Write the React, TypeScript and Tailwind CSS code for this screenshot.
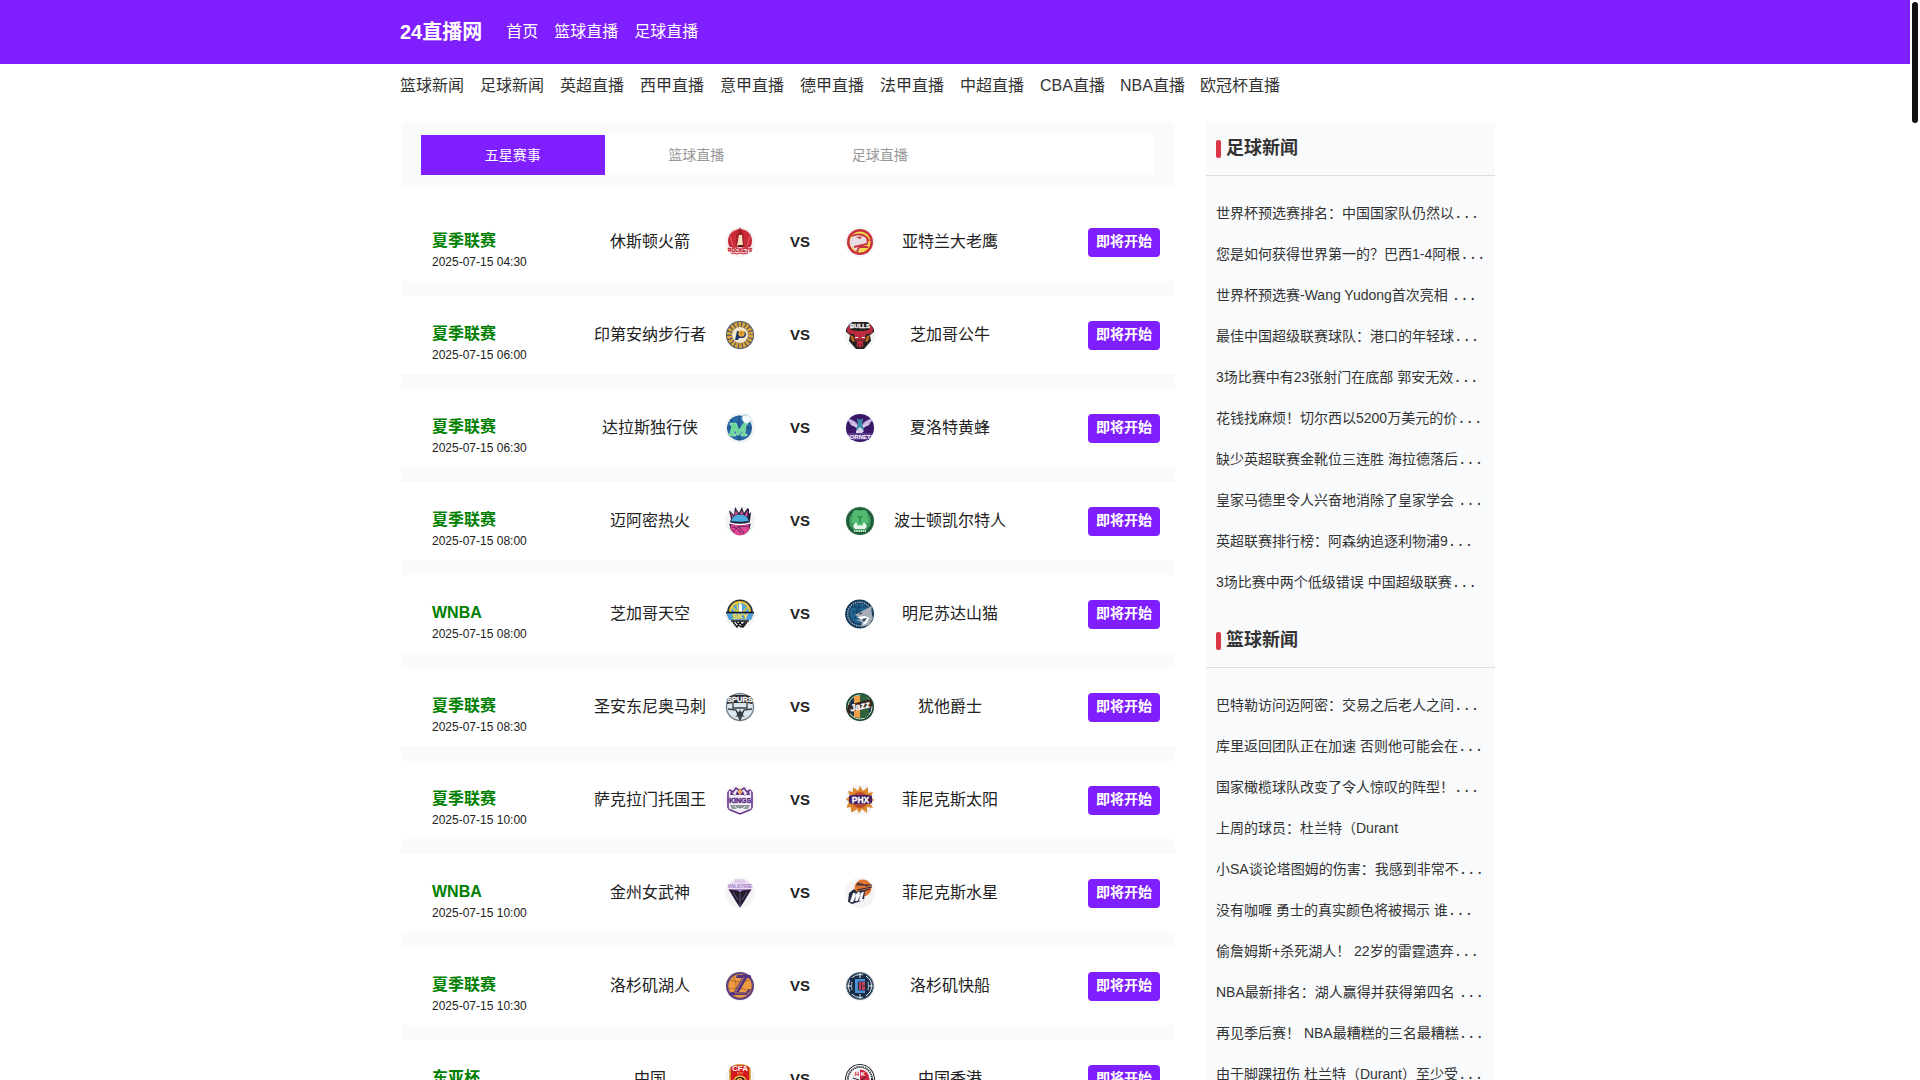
import type { ReactNode } from 'react';

const label = { fontFamily: '"Liberation Sans", Arial, sans-serif', fontWeight: 700 } as const;

/* Team emblems, each drawn on a 30 x 30 canvas. */
const emblems: Record<string, ReactNode> = {
  rockets: (
    <>
      <circle cx="15" cy="14" r="12" fill="#c92a3a" />
      <path d="M7 5 12 3M5 9l3 10M25 9l-3 10" stroke="#e3626d" strokeWidth="1" />
      <path d="M15 0 11 9v11h8V9z" fill="#a51f2c" />
      <path d="M14 8h3l1 11h-6z" fill="#f2e2bb" />
      <path d="M13 18h5v2h-5z" fill="#5c1b1d" />
      <path d="m2 19 7 2 6-1 6 1 7-2-2 7-5 1-6-1-5 1-6-1z" fill="#f6dfe2" />
      <text x="15" y="25" fontSize="5" textAnchor="middle" fill="#c3202f" stroke="#c3202f" strokeWidth=".3" style={label}>ROCKETS</text>
      <path d="m6 27 3-1 3 1 3-1 3 1 5-1" stroke="#c92a3a" strokeWidth="1" fill="none" />
    </>
  ),
  hawks: (
    <>
      <circle cx="15" cy="15" r="13" fill="#c8323f" />
      <circle cx="15" cy="15" r="10.500" fill="#f4dc4c" />
      <path d="M5 18V13l4-6 10 1 4 5-1 4-8 3 1 4-5-1z" fill="#e8dde1" />
      <path d="M7 9c6-3 14-2 17 5M9 20l13-3c1-2 1-3 0-5M12 25c1-3 1-4 3-5l8 0" stroke="#c8323f" strokeWidth="1.800" fill="none" />
      <path d="m11 10 6-.5-2 2.500-2-1z" fill="#c8323f" />
    </>
  ),
  pacers: (
    <>
      <circle cx="15" cy="15" r="14" fill="#4b5565" />
      <circle cx="15" cy="15" r="10.600" fill="none" stroke="#d9a33a" strokeWidth="5" strokeDasharray="2.600 1.100" />
      <circle cx="15" cy="15" r="8" fill="#f4e8cf" />
      <path d="m10 20 2-9h5c6 0 5 7 0 7h-3l-1 2z" fill="#1d3567" />
      <circle cx="16.500" cy="13.500" r="3.200" fill="#edb13a" />
      <path d="M14 13h5M16.500 11v6" stroke="#94601e" strokeWidth=".5" />
    </>
  ),
  bulls: (
    <>
      <path d="M1 12C0 8 3 3 6 2h18c3 1 6 6 5 10l-4 3 1 6-7 8h-8l-7-8 1-6z" fill="#25211f" />
      <path d="M2 11c0-3 1-5 3-6l1 5 6 1h6l6-1 1-5c2 1 3 3 3 6-1 3-4 3-7 3l-1 5-2 5h-6l-2-5-1-5c-3 0-6 0-7-3z" fill="#bd2b3e" />
      <path d="m5 15 3 1 2 6-3-1zM25 15l-3 1-2 6 3-1z" fill="#c66a24" />
      <path d="M10 17.500h3M20 17.500h-3" stroke="#fff" strokeWidth="1" />
      <path d="M12 20h6l1 6-4 2-4-2z" fill="#bd2b3e" stroke="#25211f" strokeWidth=".8" />
      <path d="M13 25h1M16 25h1" stroke="#111" />
      <text x="15" y="8" fontSize="6" textAnchor="middle" fill="#fff" stroke="#fff" strokeWidth=".3" style={label}>BULLS</text>
    </>
  ),
  mavs: (
    <>
      <circle cx="14.500" cy="15" r="12.500" fill="#2869a3" />
      <path d="M14 2.500v25M2 15h24M5 6c6 5 6 13 0 18M23 6c-6 5-6 13 0 18" stroke="#173f6b" strokeWidth=".8" fill="none" />
      <path d="M17 4c2-4 4-1 5-2 2 0 2 3 6 3-1 4-4 4-6 6-3-1-6-4-5-7z" fill="#f6f9fc" stroke="#679fc5" strokeWidth=".7" />
      <path d="M5 10h6l3 7 5-7h4l-1 2h-1l-1 9h2v2h-6v-2h1l1-5-4 6h-2l-2-6-1 5h2v2H3v-2h2l2-9H5z" fill="#68d995" stroke="#c9f5da" strokeWidth=".5" />
    </>
  ),
  hornets: (
    <>
      <circle cx="15" cy="15" r="14" fill="#3a1768" />
      <path d="M13 12C10 7 6 6 2 6l4 6 6 3zM17 12c3-5 7-6 11-6l-4 6-6 3z" fill="#b9a3dc" />
      <path d="m3 6 9 7M27 6l-9 7M6 11l6 3M24 11l-6 3" stroke="#eef" strokeWidth=".8" />
      <path d="m12 5 3 2 3-2-1 7 2 4-4 4-4-4 2-4z" fill="#3c8ea8" />
      <path d="m11 18 4-4 4 4-4 4-4-2z" fill="#d8d5ed" />
      <path d="M3 20h24l-3 7H6z" fill="#5b3a8d" />
      <text x="15" y="25.500" fontSize="6" textAnchor="middle" fill="#fff" style={label}>HORNETS</text>
    </>
  ),
  heat: (
    <>
      <path d="M6 13 4 4l5 5 1-8 4 6 3-6 2 6 5-7v8l2-2-1 9z" fill="#23203b" />
      <path d="m7 13-1-6 3 4 2-7 3 6 3-6 2 6 4-6-1 10z" fill="#d94995" />
      <circle cx="15" cy="18.500" r="10.500" fill="#21203b" />
      <path d="M6 15a9.500 9.500 0 0 1 18 0c-6 1-12 1-18 0" fill="#4aaede" />
      <path d="M5.500 20A9.500 9.500 0 0 0 24.500 20z" fill="#df4594" />
      <path d="M5 17c6 2 14 2 20 0" stroke="#fff" strokeWidth="1.600" fill="none" />
      <path d="M6 17.800c6 2 12 2 18 0v4H6z" fill="#df4594" />
      <path d="M8 26c3-5 9-7 16-5M13 20c2 2 5 5 6 8M7 21c4 0 8 3 9 7" stroke="#42244f" strokeWidth=".8" fill="none" />
    </>
  ),
  celtics: (
    <>
      <circle cx="15" cy="15" r="14" fill="#22623c" />
      <circle cx="15" cy="15" r="11.700" fill="#3c9b5b" stroke="#1b4b30" strokeWidth="1" />
      <g fill="#52ba71">
        <circle cx="11.500" cy="8" r="4" /><circle cx="18.500" cy="8" r="4" /><circle cx="10" cy="14" r="3.800" /><circle cx="20" cy="14" r="3.800" />
        <path d="M10 8h10v12H10z" />
      </g>
      <path d="m13 10 2 2 2-2M15 12v5" stroke="#2d834a" strokeWidth="1.300" fill="none" />
      <path d="m8 20 3-4 2 4 2-1 2 1 2-4 3 4-2 3h-10z" fill="#e6f5ea" />
      <path d="M9 25h12" stroke="#c7e8cf" strokeWidth="2" strokeDasharray="1.500 .7" />
    </>
  ),
  sky: (
    <>
      <path d="M2 14a13 13.500 0 0 1 26 0z" fill="#26303b" />
      <path d="M4 13a11 11 0 0 1 22 0z" fill="#edc735" />
      <path d="M6 13a9 9 0 0 1 18 0z" fill="#57a6db" />
      <path d="m7 8 5 5M12 4l1 9M23 8l-5 5" stroke="#edc735" strokeWidth="1.500" />
      <path d="M14 14V6l1-3 2 4v7z" fill="#fff" />
      <path d="M1 14h28l-3 7H4z" fill="#4d9ddb" /><path d="M1 13.500h28" stroke="#111" strokeWidth="1.400" />
      <text x="15" y="20.300" fontSize="7.500" textAnchor="middle" fill="#f7dd3f" stroke="#f7dd3f" strokeWidth=".4" style={label}>SKY</text>
      <path d="M6 22h18M8 23l4 5 3-5 3 5 4-5M11 23l5 5 4-5" stroke="#111" strokeWidth="1.300" fill="none" />
    </>
  ),
  lynx: (
    <>
      <circle cx="14.500" cy="15" r="14.500" fill="#173b5b" />
      <circle cx="14.500" cy="15" r="11.800" fill="none" stroke="#a5b9c8" strokeWidth="1.400" strokeDasharray="1.300 1" />
      <circle cx="14.500" cy="14.500" r="10" fill="#216390" />
      <path d="M7 8h15M7 13h12M14 5v13M9 6c4 4 4 9 0 14" stroke="#103553" strokeWidth=".8" fill="none" />
      <path d="m10 16 9-5 8-4-1 6 2 6-4 7-8 2 1-5-6-2 6-1z" fill="#a7adb7" />
      <path d="m12 18 8-1 4 2-2 5-4 2 1-4z" fill="#fff" /><path d="m14 15 3-1" stroke="#1c2d3c" /><path d="m17 20 5-1-3 4z" fill="#173b5b" />
    </>
  ),
  spurs: (
    <>
      <circle cx="15" cy="15" r="13.500" fill="#dce6ef" stroke="#6b747d" strokeWidth="1.200" />
      <path d="M8 11v5h14v-5M3 17l8 1 4 10 4-10 8-1" stroke="#343b42" strokeWidth="1.300" fill="none" />
      <path d="m15 17 1 3 3-1-2 3 3 3-4-1-1 4-1-4-4 1 3-3-2-3 3 1z" fill="#343b42" />
      <path d="M1 5c9-3 18-3 28 0l-2 7-5-1H8l-6 1z" fill="#24272a" />
      <text x="15" y="10" fontSize="7.500" textAnchor="middle" fill="#fff" stroke="#fff" strokeWidth=".3" style={label}>SPURS</text>
    </>
  ),
  jazz: (
    <>
      <circle cx="15" cy="15" r="14" fill="#1a4730" />
      <circle cx="15" cy="15" r="12" fill="#183650" stroke="#dbe2d3" strokeWidth="1" />
      <path d="M9 4h6v22l-6-1z" fill="#efa044" /><path d="M15 3h6l3 5v15l-4 3h-5z" fill="#2e633e" />
      <path d="m3 13 23-6 2 7-19 5-5 3-2-3z" fill="#3a271d" />
      <text x="15" y="17.500" fontSize="9.500" textAnchor="middle" fill="#fff" stroke="#fff" strokeWidth=".3" fontStyle="italic" transform="rotate(-12 15 15)" style={label}>Jazz</text>
    </>
  ),
  kings: (
    <>
      <path d="M3 4 8 7l3-4 4 3 4-3 3 4 5-3v20l-12 5-12-5z" fill="#f3edf7" stroke="#62358c" strokeWidth="1.600" />
      <path d="m5 10 1-4 4 5 2-5 3 4 3-4 2 5 4-5 1 4z" fill="#62358c" />
      <path d="m13 7 2-4 2 4-2 3z" fill="#e9a43f" />
      <text x="15" y="18" fontSize="7" textAnchor="middle" fill="#532781" stroke="#532781" strokeWidth=".4" style={label}>KINGS</text>
      <path d="M5 20h20l-2 4H7z" fill="#8d979b" /><path d="M10 21c1 4 9 4 10 0" stroke="#fff" fill="none" />
    </>
  ),
  suns: (
    <>
      <path d="m15 1 3 5 5-4v6l5-1-2 5 3 3-4 3 3 5-6-1v6l-5-4-3 4-2-4-6 4v-6l-5 1 3-6-3-3 4-3-2-5 5 1V2l5 4z" fill="#dc852b" />
      <circle cx="15" cy="15" r="8" fill="#ba4a30" />
      <path d="m4 11 3-1h17l3 1v7l-3 1H7l-3-1z" fill="#442164" />
      <text x="15.500" y="18" fontSize="8.500" textAnchor="middle" fill="#fff" stroke="#fff" strokeWidth=".3" style={label}>PHX</text>
    </>
  ),
  valkyries: (
    <>
      <path d="M4 8C8-1 22-1 26 8l-1 3H5z" fill="#eadcf3" />
      <path d="M10 2h10M10 4h10" stroke="#c4a6d9" strokeDasharray="1 .7" />
      <text x="15" y="10" fontSize="5" textAnchor="middle" fill="#ad8bc8" stroke="#ad8bc8" strokeWidth=".2" style={label}>VALKYRIE</text>
      <path d="M3 11h24L15 30z" fill="#ad83ce" /><path d="m4 11.500 9 1 2 2 2-2 9-1-7 12-4 6-4-6z" fill="#211d2b" />
      <path d="m8 14 5 8M22 14l-5 8M15 15v14" stroke="#8b69aa" strokeWidth=".7" />
    </>
  ),
  mercury: (
    <>
      <circle cx="18" cy="10" r="8.500" fill="#e27432" />
      <path d="m12 5 11 3M11 7l16 0M12 12l15-3M15 14l10-3" stroke="#272b40" strokeWidth="1.200" />
      <path d="m4 15 5-4 3 3 4-2 4 1-1 9-12 4-4-2z" fill="#252a42" />
      <path d="M5 24 8 15h2.500l-.5 2.500L13 14h2l-.5 3L17 14h2l-2 7h2l-1 2h-4l1.500-6-3 6H10l1-5-3 6z" fill="#fff" stroke="#a9a2bd" strokeWidth=".3" />
    </>
  ),
  lakers: (
    <>
      <circle cx="15" cy="15" r="14" fill="#61417f" /><circle cx="15" cy="15" r="11.700" fill="#ed9b3f" />
      <path d="M5 9c7 3 15 2 21-1M4 18c8-2 15-1 22 3M8 5c4 6 4 14 1 21" stroke="#a96231" strokeWidth=".8" fill="none" />
      <path d="M12 4h15l-2 3h-3l-8 14h7l3-3h2l-4 6H4l2-3h3l8-14h-6z" fill="#513281" /><path d="m19 6-9 16h12" stroke="#ed9b3f" strokeWidth=".7" fill="none" />
    </>
  ),
  clippers: (
    <>
      <circle cx="15" cy="15" r="13.500" fill="#172b46" stroke="#64788b" strokeWidth="1" />
      <circle cx="15" cy="15" r="11.500" fill="none" stroke="#e8edf3" strokeWidth="1" strokeDasharray="12 3" />
      <path d="M2 15h5M23 15h5M7 11v8M23 11v8M15 2v5M15 23v5" stroke="#e8edf3" strokeWidth="1" />
      <circle cx="15" cy="15" r="8" fill="#172b46" />
      <path d="M10 8h10v2.500h-7v9h7V22H10z" fill="#4e91d5" /><path d="M14 11h6v8h-6z" fill="#cf3e59" /><path d="M16.500 11v8M16.500 15H20" stroke="#172b46" strokeWidth=".8" />
    </>
  ),
  china: (
    <>
      <path d="M5 2c6-2 14-2 20 0v21l-10 7-10-7z" fill="#d51b21" stroke="#d6a73b" strokeWidth="1.600" />
      <text x="15" y="7" fontSize="8" textAnchor="middle" fill="#fff" style={label}>CFA</text>
      <path d="M12 9h6" stroke="#f7c25d" strokeDasharray="2 .5" />
      <circle cx="15" cy="18" r="6" fill="#2a1714" stroke="#e8be49" strokeWidth="1.500" /><path d="M12 16c4-3 7 1 4 4" stroke="#e8be49" strokeWidth="1.500" fill="none" />
    </>
  ),
  hongkong: (
    <>
      <circle cx="15" cy="15" r="14.500" fill="#fff" stroke="#262a32" strokeWidth="1.200" />
      <circle cx="15" cy="15" r="12" fill="none" stroke="#262a32" strokeWidth="2" strokeDasharray="1.300 .8" />
      <circle cx="15" cy="15" r="9.500" fill="#ececef" /><path d="M15 5.500a9.500 9.500 0 0 1 0 19z" fill="#ce2640" />
      <text x="12" y="11.500" fontSize="6" textAnchor="middle" fill="#ce2640" style={label}>H</text>
      <text x="18" y="11.500" fontSize="6" textAnchor="middle" fill="#fff" style={label}>K</text>
      <path d="m8 14 6 2-5 4M21 13l-5 3 5 4" stroke="#262a32" fill="none" />
    </>
  ),
};

const links = ['首页', '篮球直播', '足球直播'];
const channels = ['篮球新闻', '足球新闻', '英超直播', '西甲直播', '意甲直播', '德甲直播', '法甲直播', '中超直播', 'CBA直播', 'NBA直播', '欧冠杯直播'];
const tabs = ['五星赛事', '篮球直播', '足球直播'];

const matches = [
  ['夏季联赛', '2025-07-15 04:30', '休斯顿火箭', 'rockets', '亚特兰大老鹰', 'hawks'],
  ['夏季联赛', '2025-07-15 06:00', '印第安纳步行者', 'pacers', '芝加哥公牛', 'bulls'],
  ['夏季联赛', '2025-07-15 06:30', '达拉斯独行侠', 'mavs', '夏洛特黄蜂', 'hornets'],
  ['夏季联赛', '2025-07-15 08:00', '迈阿密热火', 'heat', '波士顿凯尔特人', 'celtics'],
  ['WNBA', '2025-07-15 08:00', '芝加哥天空', 'sky', '明尼苏达山猫', 'lynx'],
  ['夏季联赛', '2025-07-15 08:30', '圣安东尼奥马刺', 'spurs', '犹他爵士', 'jazz'],
  ['夏季联赛', '2025-07-15 10:00', '萨克拉门托国王', 'kings', '菲尼克斯太阳', 'suns'],
  ['WNBA', '2025-07-15 10:00', '金州女武神', 'valkyries', '菲尼克斯水星', 'mercury'],
  ['夏季联赛', '2025-07-15 10:30', '洛杉矶湖人', 'lakers', '洛杉矶快船', 'clippers'],
  ['东亚杯', '2025-07-15 18:00', '中国', 'china', '中国香港', 'hongkong'],
];

const footballNews = [
  '世界杯预选赛排名：中国国家队仍然以...',
  '您是如何获得世界第一的？巴西1-4阿根...',
  '世界杯预选赛-Wang Yudong首次亮相 ...',
  '最佳中国超级联赛球队：港口的年轻球...',
  '3场比赛中有23张射门在底部 郭安无效...',
  '花钱找麻烦！切尔西以5200万美元的价...',
  '缺少英超联赛金靴位三连胜 海拉德落后...',
  '皇家马德里令人兴奋地消除了皇家学会 ...',
  '英超联赛排行榜：阿森纳追逐利物浦9...',
  '3场比赛中两个低级错误 中国超级联赛...',
];

const basketballNews = [
  '巴特勒访问迈阿密：交易之后老人之间...',
  '库里返回团队正在加速 否则他可能会在...',
  '国家橄榄球队改变了令人惊叹的阵型！...',
  '上周的球员：杜兰特（Durant',
  '小SA谈论塔图姆的伤害：我感到非常不...',
  '没有咖喱 勇士的真实颜色将被揭示 谁...',
  '偷詹姆斯+杀死湖人！ 22岁的雷霆遗弃...',
  'NBA最新排名：湖人赢得并获得第四名 ...',
  '再见季后赛！ NBA最糟糕的三名最糟糕...',
  '由于脚踝扭伤 杜兰特（Durant）至少受...',
];

function Emblem({ team }: { team: string }) {
  return (
    <svg viewBox="0 0 30 30" aria-hidden="true" className="size-[30px] shrink-0 rounded-full bg-[#f4f4f4]">
      {emblems[team]}
    </svg>
  );
}

function MatchRow({ match }: { match: string[] }) {
  const [league, time, home, homeKey, away, awayKey] = match;
  return (
    <li className="flex h-[78px] items-center bg-white pr-[15px] pl-[31px]">
      <div className="w-[158px] pt-4">
        <div className="text-base leading-6 font-bold text-[#008000]">{league}</div>
        <time className="block text-xs leading-[18px]">{time}</time>
      </div>
      <div className="w-[120px] text-center whitespace-nowrap">{home}</div>
      <div className="flex w-[180px] items-center justify-between px-[15px]">
        <Emblem team={homeKey} />
        <strong className="text-[15px]">VS</strong>
        <Emblem team={awayKey} />
      </div>
      <div className="w-[120px] text-center whitespace-nowrap">{away}</div>
      <button type="button" className="ml-auto h-[29px] w-[72px] rounded-[4px] bg-[#7f1fff] pb-[2px] text-sm font-bold text-white">即将开始</button>
    </li>
  );
}

function News({ title, items }: { title: string; items: string[] }) {
  return (
    <section className="pb-3">
      <h2 className="flex h-[53px] items-start gap-[5px] border-b border-[#dadcde] px-[10px] pt-3 text-lg leading-[26px] font-bold">
        <span className="mt-[5px] h-[18px] w-[5px] rounded-[2px] bg-[#dc3545]" />
        {title}
      </h2>
      <ul className="px-[10px] pt-[17px]">
        {items.map((item) => {
          const cut = item.endsWith('...');
          return (
            <li key={item} className="h-[41px] text-sm leading-[41px] whitespace-nowrap">
              <a href="#news" className="block">
                {cut ? item.slice(0, -3) : item}
                {cut && <span className="font-['DejaVu_Sans_Mono',monospace]">...</span>}
              </a>
            </li>
          );
        })}
      </ul>
    </section>
  );
}

export default function App() {
  return (
    <div lang="zh-CN" className="flex h-screen overflow-hidden bg-white font-['Liberation_Sans','Noto_Sans_CJK_SC',sans-serif] text-base text-[#212121]">
      <div className="min-w-0 flex-1">
        <header className="bg-[#7f1fff] text-white">
          <nav className="mx-auto flex h-16 max-w-[1110px] items-center gap-4">
            <a href="#home" className="mr-2 text-xl font-bold">24直播网</a>
            {links.map((item) => <a key={item} href="#nav">{item}</a>)}
          </nav>
        </header>
        <div className="mx-auto max-w-[1110px]">
          <nav className="flex h-[59px] pt-[10px] text-[#333]">
            {channels.map((item) => <a key={item} href="#channel" className="min-w-20 leading-6 whitespace-nowrap">{item}</a>)}
          </nav>
          <div className="flex items-start gap-[31px] pr-[15px] pl-px">
            <main className="min-w-0 flex-1">
              <div className="mb-4 rounded-[4px] bg-[#f9fafc] px-5 py-3">
                <div role="tablist" className="flex h-10 bg-white text-sm text-[#999]">
                  {tabs.map((item, i) => (
                    <button key={item} type="button" role="tab" aria-selected={i === 0} className="w-1/4 aria-selected:bg-[#7f1fff] aria-selected:text-white">{item}</button>
                  ))}
                </div>
              </div>
              <ul className="flex flex-col gap-[15px] bg-[#f9fafc]">
                {matches.map((match) => <MatchRow key={match[2]} match={match} />)}
              </ul>
            </main>
            <aside className="w-[289px] shrink-0 bg-[#f9fafc] text-[#333]">
              <News title="足球新闻" items={footballNews} />
              <News title="篮球新闻" items={basketballNews} />
            </aside>
          </div>
        </div>
      </div>
      <div aria-hidden="true" className="w-[10px] shrink-0 bg-white p-[2px]">
        <div className="h-[121px] w-[6px] rounded-full bg-[#111]" />
      </div>
    </div>
  );
}
